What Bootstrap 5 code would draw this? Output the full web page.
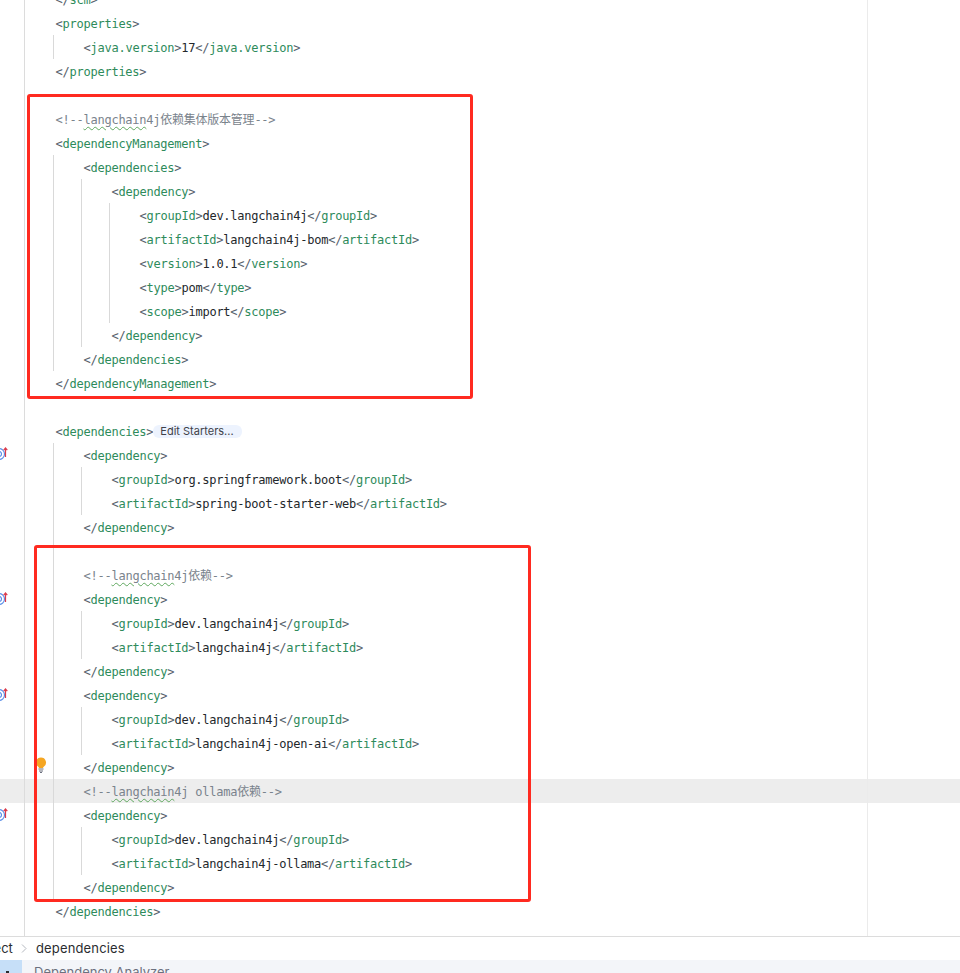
<!DOCTYPE html>
<html lang="en">
<head>
<meta charset="utf-8">
<title>pom.xml</title>
<link href="https://cdn.jsdelivr.net/npm/bootstrap@5.3.0/dist/css/bootstrap.min.css" rel="stylesheet">
<style>
html,body{height:973px;overflow:hidden;background:#fff}
.ide-editor{height:936px;isolation:isolate;background:#fff;font-family:"DejaVu Sans Mono","Noto Sans CJK SC",monospace;font-size:12px;letter-spacing:-.24px;color:#56616b}
.ide-gutter{width:25px;border-right:1px solid #dcdcdc}
.ide-code{width:843px;border-right:1px solid #ebebeb;padding-left:30.5px;margin-top:-13px;flex:none}
.ln{height:24px;line-height:26px;white-space:pre}
.blk{margin-left:-2.5px;padding-left:29.5px;border-left:1px solid #d9d9d9}
.tn{color:#2e8b5b}
.tv{color:#23272b}
.cm{color:#7a838c}
.sq{text-decoration:underline wavy #5fa85f 1px;text-underline-offset:2px}
.ln-hl::before{content:"";position:absolute;left:0;right:0;height:24px;background:#ededed;z-index:-1}
.chip{display:inline-block;height:13px;line-height:13px;padding:0 8px 0 7px;vertical-align:1px;background:#edf3fe;border-radius:6px;font:11px/13px Inter,sans-serif;letter-spacing:0;color:#3f4248}
.redbox{position:absolute;border:3px solid #ff2a20;border-radius:3px}
.rb-a{left:27px;top:94px;width:446px;height:305px}
.rb-b{left:34px;top:545px;width:497px;height:357px}
.gi{position:absolute;left:0;width:12px;height:16px}
.gi-a{top:446px}.gi-b{top:591px}.gi-c{top:687px}.gi-d{top:807px}
.bulb{position:absolute;left:35px;top:757px;width:12px;height:16px}
.crumbs{height:24px;border-top:1px solid #dcdcdc;font:13px/23px Inter,sans-serif;color:#2b2d30}
.crumb-clip{margin-left:-30px;width:42px;flex:none;white-space:nowrap;text-align:right}
.crumb-sep{width:24px;flex:none;text-align:center}
.crumb-sep svg{display:block;margin:7px auto 0 9px}
.crumb-now{letter-spacing:.15px}
.toolbar{height:13px;background:#f3f5f9;font:13px/24px Inter,sans-serif;color:#6c707e}
.tool-sel{width:22px;background:#c6dff8;flex:none;margin-right:12px}
.tool-dot{display:block;width:3px;height:2px;margin:11px 0 0 6px;background:#2b2d30}
</style>
</head>
<body class="m-0">
<div class="ide-editor position-relative d-flex overflow-hidden">
  <div class="ide-gutter flex-shrink-0"></div>
  <div class="ide-code">
    <div class="ln">&lt;/<span class="tn">scm</span>&gt;</div>
    <div class="ln">&lt;<span class="tn">properties</span>&gt;</div>
    <div class="blk">
      <div class="ln">&lt;<span class="tn">java.version</span>&gt;<span class="tv">17</span>&lt;/<span class="tn">java.version</span>&gt;</div>
    </div>
    <div class="ln">&lt;/<span class="tn">properties</span>&gt;</div>
    <div class="ln"></div>
    <div class="ln cm">&lt;!--<span class="sq">langchain</span>4j依赖集体版本管理--&gt;</div>
    <div class="ln">&lt;<span class="tn">dependencyManagement</span>&gt;</div>
    <div class="blk">
      <div class="ln">&lt;<span class="tn">dependencies</span>&gt;</div>
      <div class="blk">
        <div class="ln">&lt;<span class="tn">dependency</span>&gt;</div>
        <div class="blk">
          <div class="ln">&lt;<span class="tn">groupId</span>&gt;<span class="tv">dev.langchain4j</span>&lt;/<span class="tn">groupId</span>&gt;</div>
          <div class="ln">&lt;<span class="tn">artifactId</span>&gt;<span class="tv">langchain4j-bom</span>&lt;/<span class="tn">artifactId</span>&gt;</div>
          <div class="ln">&lt;<span class="tn">version</span>&gt;<span class="tv">1.0.1</span>&lt;/<span class="tn">version</span>&gt;</div>
          <div class="ln">&lt;<span class="tn">type</span>&gt;<span class="tv">pom</span>&lt;/<span class="tn">type</span>&gt;</div>
          <div class="ln">&lt;<span class="tn">scope</span>&gt;<span class="tv">import</span>&lt;/<span class="tn">scope</span>&gt;</div>
        </div>
        <div class="ln">&lt;/<span class="tn">dependency</span>&gt;</div>
      </div>
      <div class="ln">&lt;/<span class="tn">dependencies</span>&gt;</div>
    </div>
    <div class="ln">&lt;/<span class="tn">dependencyManagement</span>&gt;</div>
    <div class="ln"></div>
    <div class="ln">&lt;<span class="tn">dependencies</span>&gt;<span class="chip">Edit Starters...</span></div>
    <div class="blk">
      <div class="ln">&lt;<span class="tn">dependency</span>&gt;</div>
      <div class="blk">
        <div class="ln">&lt;<span class="tn">groupId</span>&gt;<span class="tv">org.springframework.boot</span>&lt;/<span class="tn">groupId</span>&gt;</div>
        <div class="ln">&lt;<span class="tn">artifactId</span>&gt;<span class="tv">spring-boot-starter-web</span>&lt;/<span class="tn">artifactId</span>&gt;</div>
      </div>
      <div class="ln">&lt;/<span class="tn">dependency</span>&gt;</div>
      <div class="ln"></div>
      <div class="ln cm">&lt;!--<span class="sq">langchain</span>4j依赖--&gt;</div>
      <div class="ln">&lt;<span class="tn">dependency</span>&gt;</div>
      <div class="blk">
        <div class="ln">&lt;<span class="tn">groupId</span>&gt;<span class="tv">dev.langchain4j</span>&lt;/<span class="tn">groupId</span>&gt;</div>
        <div class="ln">&lt;<span class="tn">artifactId</span>&gt;<span class="tv">langchain4j</span>&lt;/<span class="tn">artifactId</span>&gt;</div>
      </div>
      <div class="ln">&lt;/<span class="tn">dependency</span>&gt;</div>
      <div class="ln">&lt;<span class="tn">dependency</span>&gt;</div>
      <div class="blk">
        <div class="ln">&lt;<span class="tn">groupId</span>&gt;<span class="tv">dev.langchain4j</span>&lt;/<span class="tn">groupId</span>&gt;</div>
        <div class="ln">&lt;<span class="tn">artifactId</span>&gt;<span class="tv">langchain4j-open-ai</span>&lt;/<span class="tn">artifactId</span>&gt;</div>
      </div>
      <div class="ln">&lt;/<span class="tn">dependency</span>&gt;</div>
      <div class="ln cm ln-hl">&lt;!--<span class="sq">langchain</span>4j ollama依赖--&gt;</div>
      <div class="ln">&lt;<span class="tn">dependency</span>&gt;</div>
      <div class="blk">
        <div class="ln">&lt;<span class="tn">groupId</span>&gt;<span class="tv">dev.langchain4j</span>&lt;/<span class="tn">groupId</span>&gt;</div>
        <div class="ln">&lt;<span class="tn">artifactId</span>&gt;<span class="tv">langchain4j-ollama</span>&lt;/<span class="tn">artifactId</span>&gt;</div>
      </div>
      <div class="ln">&lt;/<span class="tn">dependency</span>&gt;</div>
    </div>
    <div class="ln">&lt;/<span class="tn">dependencies</span>&gt;</div>
  </div>

  <svg class="gi gi-a" viewBox="0 0 12 16"><g fill="none"><circle cx="-1" cy="8" r="5.500" stroke="#5a8fe8" stroke-width="1.2"/><circle cx="-1" cy="8" r="2.500" stroke="#5a8fe8" stroke-width="1.2"/><path d="M5.500 11V2M3.700 4.200 5.500 2l1.800 2.200" stroke="#db3b4b" stroke-width="1.2"/></g></svg>
  <svg class="gi gi-b" viewBox="0 0 12 16"><g fill="none"><circle cx="-1" cy="8" r="5.500" stroke="#5a8fe8" stroke-width="1.2"/><circle cx="-1" cy="8" r="2.500" stroke="#5a8fe8" stroke-width="1.2"/><path d="M5.500 11V2M3.700 4.200 5.500 2l1.800 2.200" stroke="#db3b4b" stroke-width="1.2"/></g></svg>
  <svg class="gi gi-c" viewBox="0 0 12 16"><g fill="none"><circle cx="-1" cy="8" r="5.500" stroke="#5a8fe8" stroke-width="1.2"/><circle cx="-1" cy="8" r="2.500" stroke="#5a8fe8" stroke-width="1.2"/><path d="M5.500 11V2M3.700 4.200 5.500 2l1.800 2.200" stroke="#db3b4b" stroke-width="1.2"/></g></svg>
  <svg class="gi gi-d" viewBox="0 0 12 16"><g fill="none"><circle cx="-1" cy="8" r="5.500" stroke="#5a8fe8" stroke-width="1.2"/><circle cx="-1" cy="8" r="2.500" stroke="#5a8fe8" stroke-width="1.2"/><path d="M5.500 11V2M3.700 4.200 5.500 2l1.800 2.200" stroke="#db3b4b" stroke-width="1.2"/></g></svg>
  <svg class="bulb" viewBox="0 0 12 16"><path d="M6 .5a5 5 0 0 1 3 9c-.6.5-1 1-1 1.500H4c0-.5-.4-1-1-1.500a5 5 0 0 1 3-9z" fill="#f5a623"/><path d="M3.500 12h5M4 14h4M5 15.500h2" stroke="#6c707e" stroke-width="1" fill="none"/></svg>

  <div class="redbox rb-a"></div>
  <div class="redbox rb-b"></div>
</div>
<div class="crumbs d-flex overflow-hidden">
  <span class="crumb-clip">project</span>
  <span class="crumb-sep"><svg width="6" height="9" viewBox="0 0 6 9"><path d="M1 .5 5 4.500 1 8.500" fill="none" stroke="#b4b8bf" stroke-width="1"/></svg></span>
  <span class="crumb-now">dependencies</span>
</div>
<div class="toolbar d-flex overflow-hidden">
  <span class="tool-sel"><span class="tool-dot"></span></span>
  <span>Dependency Analyzer</span>
</div>
</body>
</html>
